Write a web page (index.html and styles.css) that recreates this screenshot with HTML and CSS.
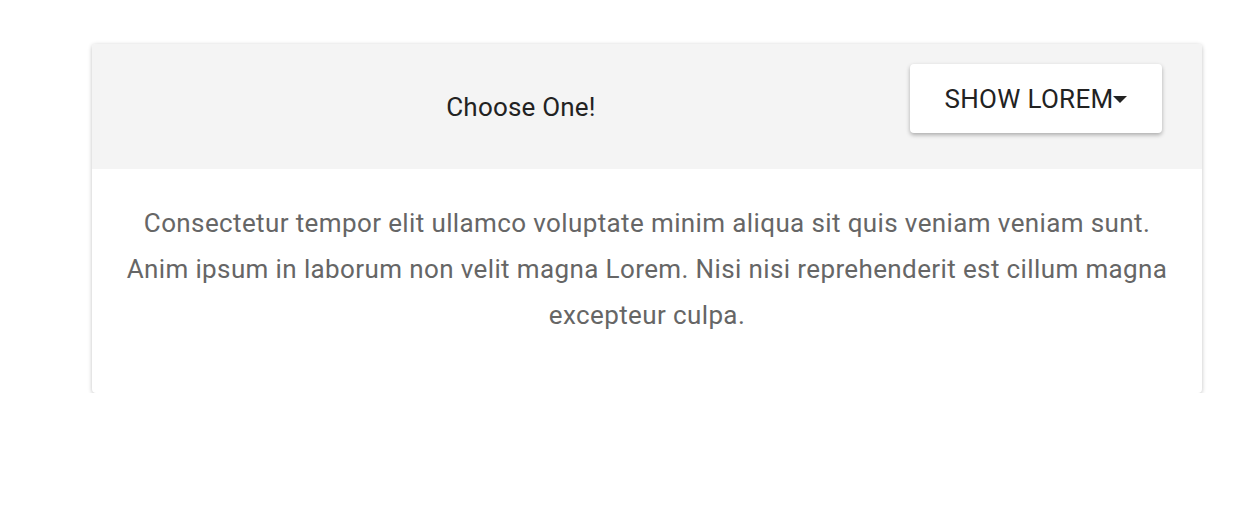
FILE: index.html
```html
<!DOCTYPE html>
<html>
<head>
<meta charset="utf-8">
<link rel="stylesheet" href="styles.css">
</head>
<body>
<div class="page">
  <div class="card">
    <div class="card-header">
      <div class="title">Choose One!</div>
      <button class="dropdown">SHOW LOREM<span class="caret"></span></button>
    </div>
    <div class="card-body">
      <p>Consectetur tempor elit ullamco voluptate minim aliqua sit quis veniam veniam sunt. Anim ipsum in laborum non velit magna Lorem. Nisi nisi reprehenderit est cillum magna excepteur culpa.</p>
    </div>
  </div>
</div>
</body>
</html>
```
FILE: styles.css
```css
html, body {
  margin: 0;
  padding: 0;
  background: #fff;
  font-family: Roboto, "Noto Sans", sans-serif;
}
.page {
  padding: 44px 44px 0 92px;
}
.card {
  width: 1110px;
  background: #fff;
  border-radius: 4px;
  box-shadow: 0 1px 4px rgba(0,0,0,0.25);
  overflow: hidden;
}
.card-header {
  background: #f4f4f4;
  height: 125px;
  box-sizing: border-box;
  padding: 20px 40px;
  display: flex;
  align-items: flex-start;
}
.title {
  flex: 1;
  text-align: center;
  align-self: center;
  font-size: 26px;
  letter-spacing: 0.2px;
  color: #222;
}
.dropdown {
  width: 252px;
  height: 69px;
  background: #fff;
  border: none;
  border-radius: 4px;
  box-shadow: 0 2px 4px rgba(0,0,0,0.3);
  font-family: Roboto, "Noto Sans", sans-serif;
  font-size: 26px;
  letter-spacing: 0.3px;
  color: #222;
  display: flex;
  align-items: center;
  justify-content: center;
  padding: 0;
}
.caret {
  width: 0;
  height: 0;
  border-left: 7px solid transparent;
  border-right: 7px solid transparent;
  border-top: 7px solid #222;
  margin-top: 2px;
}
.card-body {
  padding: 31px 30px 55px;
}
.card-body p {
  margin: 0;
  text-align: center;
  font-size: 26px;
  letter-spacing: 0.38px;
  line-height: 46px;
  color: #666;
}
```
